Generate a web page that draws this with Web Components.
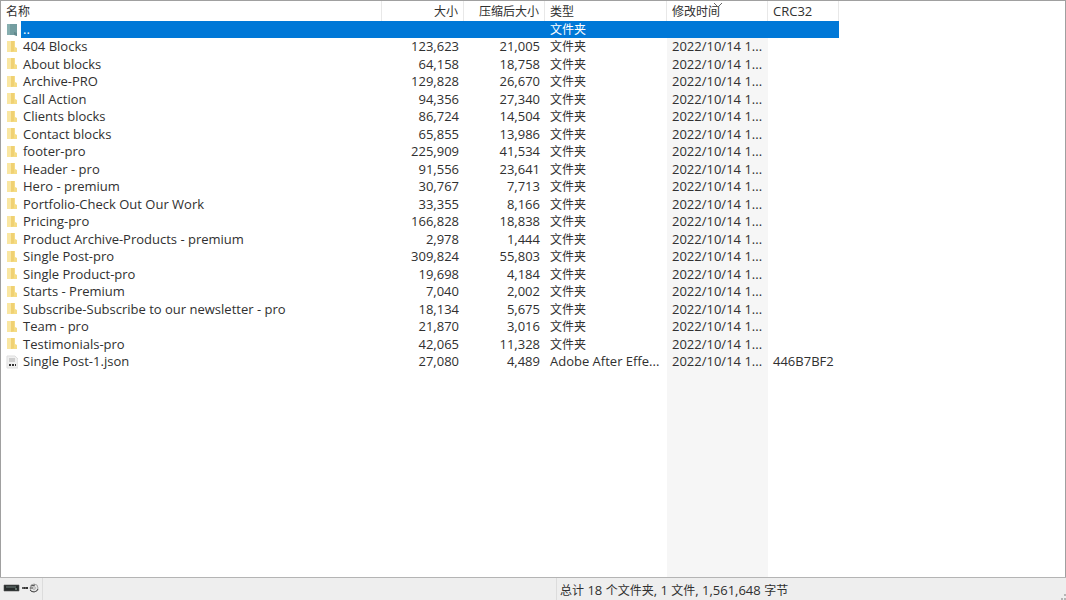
<!DOCTYPE html>
<html lang="zh-CN">
<head>
<meta charset="utf-8">
<title>文件列表</title>
<style>
html, body { margin: 0; height: 100%; }
body { font: 13px/17px "Open Sans", "Noto Sans CJK SC", sans-serif; color: #303030; background: #fff; overflow: hidden; }
</style>
</head>
<body>
<archive-window></archive-window>
<script>
const define = (name, html, setup) => {
  const template = document.createElement('template');
  template.innerHTML = html;
  customElements.define(name, class extends HTMLElement {
    constructor() {
      super();
      this.attachShadow({ mode: 'open' }).append(template.content.cloneNode(true));
    }
    connectedCallback() { if (setup) setup(this, this.shadowRoot); }
  });
};

/* Chinese text is set one pixel smaller than Latin text. */
define('zh-text', `<style>:host { font-size: 12px; }</style><slot></slot>`);

define('file-icon', `
<style>
:host { display: block; width: 12px; height: 14px; }
svg { display: none; width: 12px; height: 14px; }
:host([kind=up]) .up, :host([kind=folder]) .folder, :host([kind=file]) .file { display: block; }
</style>
<svg class="up" viewBox="0 0 12 14"><path d="M1 1h10v12l-2-1H1z" fill="#739da0"/><path d="M1 1h3v11H1z" fill="#87afb0"/><path d="M8 9l3 1v3l-3-1z" fill="#62898d"/></svg>
<svg class="folder" viewBox="0 0 12 14"><path d="M1 1h8v6l2 1v4H1z" fill="#f5dc85"/><path d="M1 1h4v11H1z" fill="#fae7a2"/><path d="M5 1h3v10l-3 1z" fill="#f0d173"/></svg>
<svg class="file" viewBox="0 0 12 14"><path d="M1 1h8l3 3v9H1z" fill="#f0f0f0" stroke="#ddd"/><path d="M3 4h6M3 6h6" stroke="#aaa"/><path d="M3 10h2m1 0h2m1 0h1" stroke="#333" stroke-width="2"/></svg>`,
);

define('file-list', `
<style>
:host { display: block; overflow: auto; border: 1px solid #a0a0a0; border-bottom: 0; background: #fff; }
table { table-layout: fixed; width: 838px; height: 100%; border-collapse: separate; border-spacing: 0; }
.c-name { width: 381px; } .c-size { width: 82px; } .c-packed { width: 81px; }
.c-type { width: 122px; } .c-time { width: 101px; } .c-crc { width: 71px; }
th, td { box-sizing: border-box; padding: 0 5px; text-align: left; font-weight: 400; white-space: nowrap; line-height: 17px; vertical-align: middle; overflow: hidden; }
th { position: relative; height: 20px; border-right: 1px solid #e8e8e8; }
.num { text-align: right; }
tbody tr { height: 17px; }
tbody tr:nth-child(odd) { height: 18px; }
tbody tr.picked { height: 17px; }
tbody tr.rest { height: auto; }
td:first-child { padding: 0; }
.name { display: flex; align-items: center; gap: 3px; padding-left: 5px; height: 17px; }
.name span { flex: 1; padding-left: 2px; }
.time { background: #f6f6f6; }
.picked td { color: #fff; background: #0078d7; }
.picked td:first-child { background: linear-gradient(to right, #fff 20px, #0078d7 20px); }
.sort { position: absolute; top: 2px; left: 47px; width: 8px; height: 5px; }
</style>
<table>
<colgroup><col class="c-name"><col class="c-size"><col class="c-packed"><col class="c-type"><col class="c-time"><col class="c-crc"></colgroup>
<thead><tr>
<th scope="col"><zh-text>名称</zh-text></th><th scope="col" class="num"><zh-text>大小</zh-text></th><th scope="col" class="num"><zh-text>压缩后大小</zh-text></th><th scope="col"><zh-text>类型</zh-text></th>
<th scope="col" aria-sort="descending"><zh-text>修改时间</zh-text><svg class="sort" viewBox="0 0 8 5"><path d="M0 0l4 4 4-4" fill="none" stroke="#666"/></svg></th><th scope="col">CRC32</th>
</tr></thead>
<tbody></tbody>
</table>`, (host, root) => {
  const folders = [
    ['404 Blocks', '123,623', '21,005'], ['About blocks', '64,158', '18,758'],
    ['Archive-PRO', '129,828', '26,670'], ['Call Action', '94,356', '27,340'],
    ['Clients blocks', '86,724', '14,504'], ['Contact blocks', '65,855', '13,986'],
    ['footer-pro', '225,909', '41,534'], ['Header - pro', '91,556', '23,641'],
    ['Hero - premium', '30,767', '7,713'], ['Portfolio-Check Out Our Work', '33,355', '8,166'],
    ['Pricing-pro', '166,828', '18,838'], ['Product Archive-Products - premium', '2,978', '1,444'],
    ['Single Post-pro', '309,824', '55,803'], ['Single Product-pro', '19,698', '4,184'],
    ['Starts - Premium', '7,040', '2,002'], ['Subscribe-Subscribe to our newsletter - pro', '18,134', '5,675'],
    ['Team - pro', '21,870', '3,016'], ['Testimonials-pro', '42,065', '11,328'],
  ];
  const folder = '<zh-text>文件夹</zh-text>';
  const date = '2022/10/14 1...';
  const row = (kind, name, size, packed, type, time, crc) => `<tr class="${kind === 'up' ? 'picked' : ''}">
    <td><div class="name"><file-icon kind="${kind}"></file-icon><span>${name}</span></div></td>
    <td class="num">${size}</td><td class="num">${packed}</td><td>${type}</td><td class="time">${time}</td><td>${crc}</td></tr>`;
  root.querySelector('tbody').innerHTML =
    row('up', '..', '', '', folder, '', '') +
    folders.map(([n, s, p]) => row('folder', n, s, p, folder, date, '')).join('') +
    row('file', 'Single Post-1.json', '27,080', '4,489', 'Adobe After Effe...', date, '446B7BF2') +
    '<tr class="rest"><td></td><td></td><td></td><td></td><td class="time"></td><td></td></tr>';
});

define('status-bar', `
<style>
:host { display: grid; grid-template-columns: 42px 514fr 510fr; height: 22px; border-top: 1px solid #b4b4b4; background: #eee; position: relative; }
div { display: flex; align-items: center; box-sizing: border-box; padding: 2px 3px 0; }
div + div { border-left: 1px solid #dcdcdc; }
.tools { padding-top: 0; padding-bottom: 3px; }
.tools svg { flex: none; width: 36px; height: 10px; }
.grip { position: absolute; right: 0; bottom: 0; width: 6px; height: 6px; }
</style>
<div class="tools"><svg viewBox="0 0 36 10" aria-hidden="true">
<path d="M1 2h15v6H1z" fill="#262b2b" stroke="#555" stroke-width=".6"/><path d="M3 4h10" stroke="#71807d" stroke-width="1"/><path d="M12 6h2" stroke="#9fbaa9"/>
<path d="M19 4h6v2h-6z" fill="#333"/><path d="M19 5h2m1 0h1" stroke="#aaa" stroke-width=".7"/>
<circle cx="31" cy="5" r="4" fill="#e5e5e5" stroke="#999" stroke-width=".8"/><path d="M27 7c2 3 7 2 8-1M28 3l4-1M27 5h4" fill="none" stroke="#444"/><circle cx="31" cy="5" r="1.3" fill="#fff" stroke="#777" stroke-width=".6"/>
</svg></div><div></div><div><slot></slot></div>
<svg class="grip" viewBox="0 0 6 6" aria-hidden="true"><path d="M4 0h2v2H4zM1 4h2v2H1zM4 4h2v2H4z" fill="#b5b5b5"/></svg>`);

define('archive-window', `
<style>
:host { display: grid; grid-template-rows: minmax(0, 1fr) auto; height: 100vh; }
p { margin: 0; white-space: nowrap; }
</style>
<file-list></file-list>
<status-bar><p><zh-text>总计</zh-text> 18 <zh-text>个文件夹</zh-text>, 1 <zh-text>文件</zh-text>, 1,561,648 <zh-text>字节</zh-text></p></status-bar>`);
</script>
</body>
</html>
